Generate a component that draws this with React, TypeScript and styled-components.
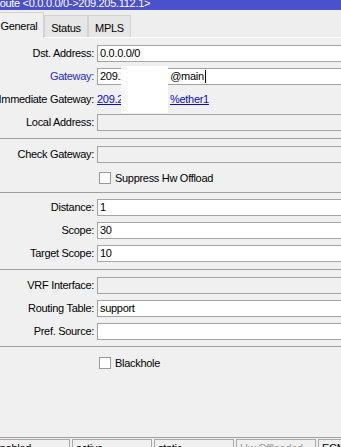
import React from "react";
import styled, { createGlobalStyle } from "styled-components";

const GlobalStyle = createGlobalStyle`
  html, body { margin: 0; padding: 0; background: #f0f0f0; overflow: hidden; }
  body {
    font-family: "Liberation Sans", Arial, sans-serif;
    font-size: 11px;
    letter-spacing: -0.3px;
    color: #000;
  }
  #root { width: 341px; height: 447px; overflow: hidden; }
`;

const Window = styled.div`
  position: relative;
  width: 341px;
  height: 459px;
  display: flex;
  flex-direction: column;
  background: #f0f0f0;
`;

const TitleBar = styled.div`
  height: 10px;
  flex-shrink: 0;
  background: #4b50cc;
  overflow: hidden;
`;

const TitleText = styled.div`
  margin: -3px 0 0 -8px;
  line-height: 12px;
  color: #fff;
  white-space: nowrap;
`;

const TabStrip = styled.div`
  height: 27px;
  flex-shrink: 0;
  display: flex;
  align-items: flex-end;
  background: #eeeeee;
  border-bottom: 1px solid #ffffff;
`;

const Tab = styled.div<{ $active?: boolean; $w: number; $ml?: number }>`
  box-sizing: border-box;
  width: ${(p) => p.$w}px;
  height: ${(p) => (p.$active ? 26 : 22)}px;
  margin-left: ${(p) => p.$ml ?? 0}px;
  margin-bottom: ${(p) => (p.$active ? -1 : 0)}px;
  padding-top: ${(p) => (p.$active ? 0 : 2)}px;
  background: ${(p) => (p.$active ? "#f0f0f0" : "#e6e6e6")};
  border: 1px solid #d2d2d2;
  border-bottom: none;
  display: flex;
  align-items: center;
  justify-content: center;
  position: relative;
  z-index: ${(p) => (p.$active ? 1 : 0)};
  white-space: nowrap;
`;

const Section = styled.div<{ $pt: number; $pb: number; $last?: boolean }>`
  flex-shrink: 0;
  display: flex;
  flex-direction: column;
  gap: 6px;
  padding: ${(p) => p.$pt}px 0 ${(p) => p.$pb}px;
  border-bottom: ${(p) => (p.$last ? "none" : "1px solid #a0a0a0")};
`;

const Row = styled.div`
  display: grid;
  grid-template-columns: 94px 1fr;
  column-gap: 3px;
  height: 17px;
`;

const Label = styled.div<{ $accent?: boolean }>`
  display: flex;
  justify-content: flex-end;
  white-space: nowrap;
  line-height: 17px;
  color: ${(p) => (p.$accent ? "#2b2bd2" : "#000")};
`;

const Field = styled.div<{ $disabled?: boolean }>`
  box-sizing: border-box;
  height: 17px;
  margin-right: -6px;
  border: 1px solid #a5a5a5;
  background: ${(p) => (p.$disabled ? "#f0f0f0" : "#ffffff")};
  padding-left: 2px;
  line-height: 15px;
  white-space: nowrap;
  overflow: hidden;
`;

const Masked = styled.span<{ $w: number }>`
  display: inline-block;
  width: ${(p) => p.$w}px;
  overflow: hidden;
  vertical-align: top;
`;

const Caret = styled.span`
  display: inline-block;
  width: 1px;
  height: 13px;
  margin-left: 1px;
  background: #000;
  vertical-align: top;
  margin-top: 1px;
`;

const LinkValue = styled.span`
  line-height: 17px;
  white-space: nowrap;
  color: #0b0bd0;
  text-decoration: underline;
`;

const CheckRow = styled.div`
  display: flex;
  align-items: center;
  gap: 4px;
  height: 17px;
  padding-left: 99px;
  white-space: nowrap;
`;

const Box = styled.span`
  box-sizing: border-box;
  width: 12px;
  height: 12px;
  border: 1px solid #9a9a9a;
  background: #fff;
  flex-shrink: 0;
`;

const Spacer = styled.div`
  flex: 1;
`;

const StatusBar = styled.div`
  box-sizing: border-box;
  height: 22px;
  flex-shrink: 0;
  display: flex;
  gap: 2px;
  border-top: 1px solid #a0a0a0;
  padding-top: 1px;
`;

const StatusPanel = styled.div<{ $dim?: boolean; $ml?: number }>`
  box-sizing: border-box;
  width: 80px;
  height: 20px;
  flex-shrink: 0;
  margin-left: ${(p) => p.$ml ?? 0}px;
  border: 1px solid #a8a8a8;
  padding: 2px 0 0 3px;
  line-height: 13px;
  white-space: nowrap;
  overflow: hidden;
  color: ${(p) => (p.$dim ? "#a0a0a0" : "#000")};
`;

const Redaction = styled.div`
  position: absolute;
  left: 121px;
  top: 66px;
  width: 47px;
  height: 47px;
  background: #ffffff;
`;

export default function App() {
  return (
    <>
      <GlobalStyle />
      <Window>
        <TitleBar>
          <TitleText>Route &lt;0.0.0.0/0-&gt;209.205.112.1&gt;</TitleText>
        </TitleBar>
        <TabStrip>
          <Tab $active $w={50} $ml={-6}>General</Tab>
          <Tab $w={44}>Status</Tab>
          <Tab $w={43}>MPLS</Tab>
        </TabStrip>

        <Section $pt={7} $pb={7}>
          <Row>
            <Label>Dst. Address:</Label>
            <Field>0.0.0.0/0</Field>
          </Row>
          <Row>
            <Label $accent>Gateway:</Label>
            <Field>
              209.<Masked $w={50}>205.112.1</Masked>@main
              <Caret />
            </Field>
          </Row>
          <Row>
            <Label>Immediate Gateway:</Label>
            <div>
              <LinkValue>
                209.2<Masked $w={47}>05.112.1</Masked>%ether1
              </LinkValue>
            </div>
          </Row>
          <Row>
            <Label>Local Address:</Label>
            <Field $disabled />
          </Row>
        </Section>

        <Section $pt={7} $pb={6}>
          <Row>
            <Label>Check Gateway:</Label>
            <Field $disabled />
          </Row>
          <CheckRow>
            <Box />
            Suppress Hw Offload
          </CheckRow>
        </Section>

        <Section $pt={6} $pb={7}>
          <Row>
            <Label>Distance:</Label>
            <Field>1</Field>
          </Row>
          <Row>
            <Label>Scope:</Label>
            <Field>30</Field>
          </Row>
          <Row>
            <Label>Target Scope:</Label>
            <Field>10</Field>
          </Row>
        </Section>

        <Section $pt={7} $pb={6}>
          <Row>
            <Label>VRF Interface:</Label>
            <Field $disabled />
          </Row>
          <Row>
            <Label>Routing Table:</Label>
            <Field>support</Field>
          </Row>
          <Row>
            <Label>Pref. Source:</Label>
            <Field />
          </Row>
        </Section>

        <Section $pt={7} $pb={0} $last>
          <CheckRow>
            <Box />
            Blackhole
          </CheckRow>
        </Section>

        <Spacer />

        <StatusBar>
          <StatusPanel $ml={-10}>enabled</StatusPanel>
          <StatusPanel>active</StatusPanel>
          <StatusPanel>static</StatusPanel>
          <StatusPanel $dim>Hw Offloaded</StatusPanel>
          <StatusPanel>ECMP</StatusPanel>
        </StatusBar>

        <Redaction />
      </Window>
    </>
  );
}
